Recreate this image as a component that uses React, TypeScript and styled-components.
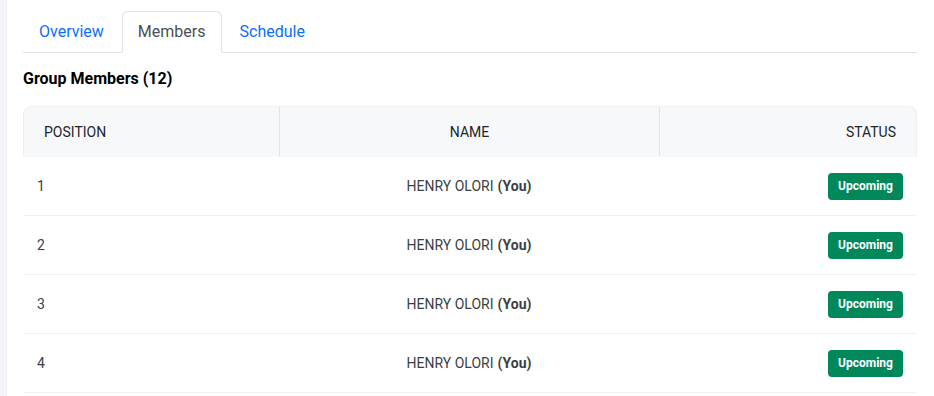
import React from "react";
import styled, { createGlobalStyle } from "styled-components";

const Global = createGlobalStyle`
  html, body { margin: 0; padding: 0; background: #ffffff; }
  body { font-family: Roboto, "Noto Sans", Arial, sans-serif; }
  * { box-sizing: border-box; }
`;

const Shell = styled.div`
  display: flex;
  min-height: 396px;
`;

const SideEdge = styled.div`
  width: 7px;
  flex: 0 0 7px;
  background: #f3f4fa;
  border-right: 1px solid #eef0f6;
`;

const Main = styled.main`
  flex: 1;
  padding: 11px 17px 0 16px;
`;

const TabBar = styled.nav`
  display: flex;
  gap: 2px;
  border-bottom: 1px solid #dee2e6;
`;

const Tab = styled.button<{ $active?: boolean }>`
  font-family: Roboto, Arial, sans-serif;
  font-size: 16px;
  line-height: 24px;
  padding: 8px 15px;
  margin-bottom: -1px;
  background: ${(p) => (p.$active ? "#fff" : "transparent")};
  color: ${(p) => (p.$active ? "#495057" : "#0d6efd")};
  border: 1px solid ${(p) => (p.$active ? "#dee2e6" : "transparent")};
  border-bottom-color: ${(p) => (p.$active ? "#fff" : "transparent")};
  border-radius: 6px 6px 0 0;
  cursor: pointer;
`;

const Title = styled.h3`
  margin: 16px 0 17px 0;
  font-size: 16px;
  line-height: 20px;
  font-weight: 700;
  color: #000;
`;

const Table = styled.div`
  display: grid;
  grid-template-columns: 256px 380px 1fr;
`;

const HeadCell = styled.div<{ $align: "left" | "center" | "right"; $first?: boolean; $last?: boolean }>`
  height: 51px;
  display: flex;
  align-items: center;
  justify-content: ${(p) => (p.$align === "left" ? "flex-start" : p.$align === "center" ? "center" : "flex-end")};
  padding: 0 20px 0 20px;
  background: #f7f8fa;
  font-size: 14px;
  color: #212529;
  text-transform: uppercase;
  border-top: 1px solid #f0f1f4;
  border-left: 1px solid ${(p) => (p.$first ? "#eceef2" : "#e1e4e8")};
  border-right: ${(p) => (p.$last ? "1px solid #eceef2" : "none")};
  border-radius: ${(p) => (p.$first ? "8px 0 0 0" : p.$last ? "0 8px 0 0" : "0")};
`;

const Cell = styled.div<{ $align: "left" | "center" | "right" }>`
  height: 59px;
  display: flex;
  align-items: center;
  justify-content: ${(p) => (p.$align === "left" ? "flex-start" : p.$align === "center" ? "center" : "flex-end")};
  padding: 0 14px 0 14px;
  border-bottom: 1px solid #eff0f2;
  font-size: 14px;
  color: #3a3f44;
`;

const You = styled.b`
  font-weight: 700;
  margin-left: 4px;
  color: #3a3f44;
`;

const Badge = styled.span`
  display: inline-flex;
  align-items: center;
  justify-content: center;
  width: 75px;
  height: 27px;
  border-radius: 4px;
  background: #00875a;
  color: #fff;
  font-size: 12px;
  font-weight: 700;
`;

const members = [1, 2, 3, 4].map((n) => ({ position: n, name: "HENRY OLORI", status: "Upcoming" }));

export default function App() {
  return (
    <>
      <Global />
      <Shell>
        <SideEdge />
        <Main>
          <TabBar>
            <Tab>Overview</Tab>
            <Tab $active>Members</Tab>
            <Tab>Schedule</Tab>
          </TabBar>
          <Title>Group Members (12)</Title>
          <Table>
            <HeadCell $align="left" $first>Position</HeadCell>
            <HeadCell $align="center">Name</HeadCell>
            <HeadCell $align="right" $last>Status</HeadCell>
            {members.map((m) => (
              <React.Fragment key={m.position}>
                <Cell $align="left">{m.position}</Cell>
                <Cell $align="center">
                  {m.name}
                  <You>(You)</You>
                </Cell>
                <Cell $align="right">
                  <Badge>{m.status}</Badge>
                </Cell>
              </React.Fragment>
            ))}
          </Table>
        </Main>
      </Shell>
    </>
  );
}
